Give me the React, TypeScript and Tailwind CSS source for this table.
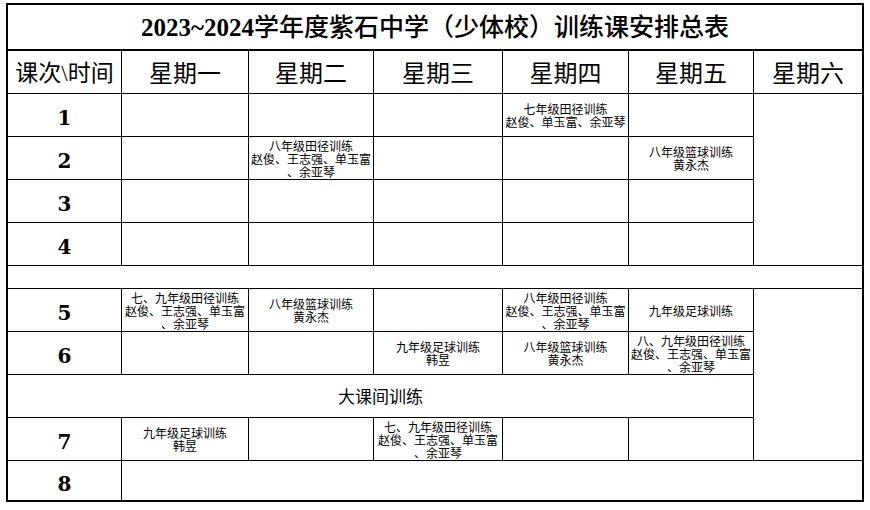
import React from 'react';

type Lines = string[];

const days = ['星期一', '星期二', '星期三', '星期四', '星期五', '星期六'];

const crew = ['赵俊、王志强、单玉富', '、余亚琴'];

// each row: label + 5 weekday cells (Saturday is merged separately)
const morning: { n: string; cells: Lines[] }[] = [
  { n: '1', cells: [[], [], [], ['七年级田径训练', '赵俊、单玉富、余亚琴'], []] },
  { n: '2', cells: [[], ['八年级田径训练', ...crew], [], [], ['八年级篮球训练', '黄永杰']] },
  { n: '3', cells: [[], [], [], [], []] },
  { n: '4', cells: [[], [], [], [], []] },
];

const afternoon: { n: string; cells: Lines[] }[] = [
  {
    n: '5',
    cells: [
      ['七、九年级田径训练', ...crew],
      ['八年级篮球训练', '黄永杰'],
      [],
      ['八年级田径训练', ...crew],
      ['九年级足球训练'],
    ],
  },
  {
    n: '6',
    cells: [[], [], ['九年级足球训练', '韩昱'], ['八年级篮球训练', '黄永杰'], ['八、九年级田径训练', ...crew]],
  },
];

const serif = "font-['Liberation_Serif','Noto_Sans_CJK_SC',serif]";
const sans = "font-['Noto_Sans_CJK_SC','Noto_Sans',sans-serif]";

function Num({ n }: { n: string }) {
  return (
    <div className="bg-white flex items-center justify-center pt-1.5 font-['DejaVu_Serif',serif] font-bold text-[20px] text-black">
      {n}
    </div>
  );
}

function Cell({ lines }: { lines: Lines }) {
  return (
    <div className={`bg-white flex flex-col items-center justify-center text-center text-[12px] leading-[13px] text-black ${sans}`}>
      {lines.map((l, i) => (
        <div key={i} className="whitespace-nowrap">{l}</div>
      ))}
    </div>
  );
}

function Row({ n, cells }: { n: string; cells: Lines[] }) {
  return (
    <>
      <Num n={n} />
      {cells.map((c, i) => (
        <Cell key={i} lines={c} />
      ))}
    </>
  );
}

export default function App() {
  return (
    <div className="min-h-[510px] bg-white pl-[6px] pt-[3px]">
      <div className="w-[858px] border-2 border-black bg-white">
        <div className={`h-[46px] flex items-center justify-center pt-0.5 border-b-2 border-black text-[25px] font-medium text-black ${serif}`}>
          <span className="font-bold">2023~2024</span>学年度紫石中学（少体校）训练课安排总表
        </div>
        <div className="grid grid-cols-[113px_126px_124px_128px_125px_124px_108px] grid-rows-[42px_42px_42px_42px_42px_22px_42px_42px_42px_42px_39px] gap-px bg-black">
          <div className={`bg-white flex items-center justify-center pt-1 text-[23px] text-black ${serif}`}>课次\时间</div>
          {days.map((d) => (
            <div key={d} className={`bg-white flex items-center justify-center pt-1 text-[24px] text-black ${serif}`}>
              {d}
            </div>
          ))}

          <Row {...morning[0]} />
          <div className="bg-white row-span-4" />
          {morning.slice(1).map((r) => (
            <Row key={r.n} {...r} />
          ))}

          <div className="bg-white col-span-7" />

          <Row {...afternoon[0]} />
          <div className="bg-white row-span-4" />
          <Row {...afternoon[1]} />

          <div className={`bg-white col-span-6 flex items-center justify-center text-[17px] text-black ${sans}`}>
            大课间训练
          </div>

          <Row n="7" cells={[['九年级足球训练', '韩昱'], [], ['七、九年级田径训练', ...crew], [], []]} />

          <Num n="8" />
          <div className="bg-white col-span-6" />
        </div>
      </div>
    </div>
  );
}
